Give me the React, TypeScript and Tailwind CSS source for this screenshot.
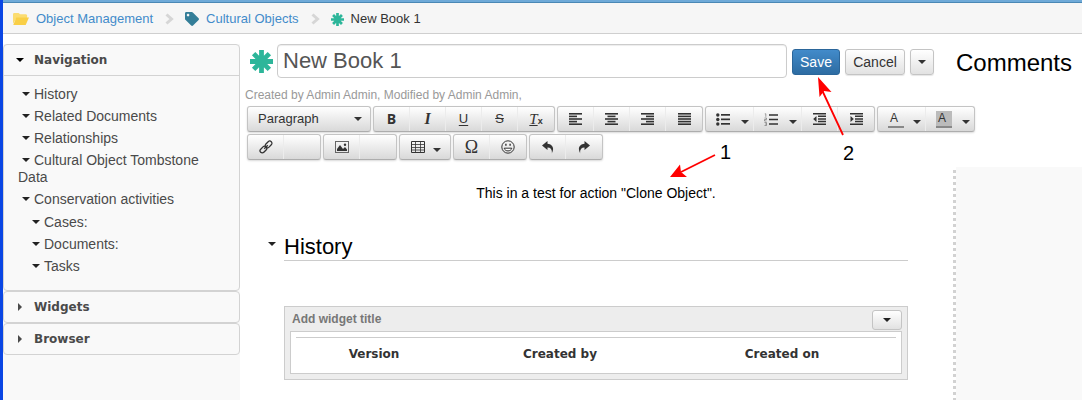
import type { ReactNode } from "react";
import { FaTag } from "react-icons/fa";

function Caret({ className = "" }: { className?: string }) {
  return (
    <svg viewBox="0 0 8 4" aria-hidden="true" className={`h-1 w-2 shrink-0 fill-current ${className}`}>
      <path d="M0 0h8L4 4z" />
    </svg>
  );
}

function CaretRight() {
  return (
    <svg viewBox="0 0 4 8" aria-hidden="true" className="mx-0.5 h-2 w-1 shrink-0 fill-current">
      <path d="M0 0v8l4-4z" />
    </svg>
  );
}

function Star({ className = "" }: { className?: string }) {
  return (
    <svg viewBox="0 0 24 24" aria-hidden="true" className={`shrink-0 text-[#2db69a] ${className}`}>
      <path
        d="M12 0v24M0 12h24M3.8 3.8l16.4 16.4M20.2 3.8L3.8 20.2"
        stroke="currentColor"
        strokeWidth="5"
      />
    </svg>
  );
}

function Folder() {
  return (
    <svg viewBox="0 0 17 14" aria-hidden="true" className="h-[14px] w-4 shrink-0">
      <path d="M0 12V1.5L1 .5h5l1.500 1.500H14l1 1V6H4z" fill="#fbdc70" />
      <path d="M3.500 5.500H17L13.500 13.500H.300z" fill="#f9cf46" />
    </svg>
  );
}

function Chevron() {
  return (
    <svg viewBox="0 0 9 12" aria-hidden="true" className="h-3 w-[9px] shrink-0">
      <path d="M1.500 1.500L6.500 6l-5 4.500" fill="none" stroke="#d6d6d6" strokeWidth="3" />
    </svg>
  );
}

type AlignKind = "left" | "center" | "right" | "full";

const alignX: Record<AlignKind, number> = { left: 0, center: 2.5, right: 5, full: 0 };

function Align({ kind }: { kind: AlignKind }) {
  const short = kind === "full" ? 13 : 8;
  return (
    <svg viewBox="0 0 13 12" aria-hidden="true" className="h-3 w-[13px]" fill="#333">
      {[0, 2.6, 5.2, 7.8, 10.4].map((y, i) => (
        <rect key={y} x={i % 2 ? alignX[kind] : 0} y={y} width={i % 2 ? short : 13} height="1.600" />
      ))}
    </svg>
  );
}

function BulletList() {
  return (
    <svg viewBox="0 0 14 13" aria-hidden="true" className="h-[13px] w-[14px]" fill="#333">
      {[2, 6.5, 11].map((y) => (
        <g key={y}>
          <circle cx="1.800" cy={y} r="1.700" />
          <rect x="5" y={y - 1} width="9" height="1.700" />
        </g>
      ))}
    </svg>
  );
}

function NumberList() {
  return (
    <svg viewBox="0 0 14 13" aria-hidden="true" className="h-[13px] w-[14px]">
      <path d="M5 2h9M5 6.500h9M5 11h9" stroke="#333" strokeWidth="1.600" />
      <path
        d="M.8.800h1v3M.5 5h2v1.500h-2V8h2M.5 9.500h2v3h-2M1 11h1.500"
        fill="none"
        stroke="#777"
        strokeWidth=".7"
      />
    </svg>
  );
}

function Indent({ out = false }: { out?: boolean }) {
  return (
    <svg viewBox="0 0 13 12" aria-hidden="true" className="h-3 w-[13px]" fill="#333">
      <path d="M0 0h13v1.500H0zM5 2.600h8v1.500H5zM5 5.200h8v1.500H5zM5 7.800h8v1.500H5zM0 10.400h13v1.500H0z" />
      <path d={out ? "M3.500 3v6L.200 6z" : "M.500 3v6l3.300-3z"} />
    </svg>
  );
}

function LinkIcon() {
  return (
    <svg viewBox="0 0 14 14" aria-hidden="true" className="size-[14px]" fill="none" stroke="#333" strokeWidth="1.300">
      <rect x="5.800" y="2.200" width="7.600" height="4.400" rx="2.200" transform="rotate(-45 9.600 4.400)" />
      <rect x=".600" y="7.400" width="7.600" height="4.400" rx="2.200" transform="rotate(-45 4.400 9.600)" />
      <path d="M5.200 8.800l3.600-3.600" />
    </svg>
  );
}

function PictureIcon() {
  return (
    <svg viewBox="0 0 14 12" aria-hidden="true" className="h-3 w-[14px]">
      <rect x=".500" y=".500" width="13" height="11" fill="none" stroke="#666" />
      <path d="M2 10V8l3-4 3 4 2-2 2 2.500V10z" fill="#333" />
      <circle cx="10" cy="3.700" r="1.200" fill="#333" />
    </svg>
  );
}

function GridIcon() {
  return (
    <svg viewBox="0 0 14 12" aria-hidden="true" className="h-3 w-[14px]" fill="none" stroke="#333">
      <path d="M.500.500h13v11H.500z" />
      <path d="M0 3.500h14M0 6.500h14M0 9h14M4.500 0v12M9.500 0v12" strokeWidth=".8" />
    </svg>
  );
}

function Smiley() {
  return (
    <svg viewBox="0 0 14 14" aria-hidden="true" className="size-[14px]" fill="none" stroke="#333">
      <circle cx="7" cy="7" r="6.200" />
      <path d="M3.200 8.200c.8 3.600 6.800 3.600 7.600 0z" fill="#fff" />
      <path d="M4.900 3.800v2M9.100 3.800v2" strokeWidth="1.400" />
    </svg>
  );
}

function HistoryArrow({ forward = false }: { forward?: boolean }) {
  return (
    <svg viewBox="0 0 12 13" aria-hidden="true" className={`h-[13px] w-3 ${forward ? "-scale-x-100" : ""}`}>
      <path d="M0 4.500L5.500 0v2.700c5 .3 7.200 4.600 4.300 9.800C10.300 8.700 9 6.600 5.500 6.500V9z" fill="#333" />
    </svg>
  );
}

function Group({ children }: { children: ReactNode }) {
  return (
    <div className="flex h-[26px] divide-x divide-[#ececec] rounded-[3px] border border-[#c4c4c4] border-b-[#adadad] bg-linear-to-b from-white to-[#d9d9d9] shadow-[0_1px_2px_rgba(0,0,0,0.15)]">
      {children}
    </div>
  );
}

function Tool({ label, menu = false, children }: { label: string; menu?: boolean; children?: ReactNode }) {
  return (
    <button
      type="button"
      aria-label={label}
      className={`flex items-center text-[#333] ${menu ? "w-12 justify-between pr-1 pl-[10px]" : "w-9 justify-center"}`}
    >
      {children}
      {menu && <Caret className="mt-[5px]" />}
    </button>
  );
}

const plainButton =
  "flex h-[26px] items-center justify-center rounded-[3px] border border-[#c4c4c4] bg-linear-to-b from-white to-[#e2e2e2] text-sm text-[#333] shadow-[0_1px_1px_rgba(0,0,0,0.1)]";

function NavItem({ label, children }: { label: string; children?: ReactNode }) {
  return (
    <li>
      <a href="#" className="mb-[5px] block">
        <Caret className="mr-1 ml-1 inline-block align-[3px] text-[#222]" />
        {label}
      </a>
      {children}
    </li>
  );
}

function Crumb({ icon, label }: { icon: ReactNode; label: string }) {
  return (
    <li className="flex items-center gap-3">
      <a href="#" className="flex items-center gap-[7px] text-[#428bca]">
        {icon}
        {label}
      </a>
      <Chevron />
    </li>
  );
}

export default function App() {
  return (
    <div className="relative flex min-h-screen flex-col overflow-hidden border-l-[3px] border-[#0a46e4] bg-white font-['Liberation_Sans',Arial,sans-serif] text-[13px] text-[#333]">
      <div className="h-[3px] border-b border-[#4a88b5] bg-[#6faad8]" />
      <nav aria-label="Breadcrumb" className="border-b border-[#cfcfcf] bg-[#f6f6f6]">
        <ol className="flex h-[30px] items-center gap-[11px] pt-0.5 pl-[10px]">
          <Crumb icon={<Folder />} label="Object Management" />
          <Crumb icon={<FaTag aria-hidden="true" className="size-[14px] text-[#347e98]" />} label="Cultural Objects" />
          <li className="flex items-center gap-[7px]">
            <Star className="size-[13px]" />
            New Book 1
          </li>
        </ol>
      </nav>

      <div className="mt-[10px] flex grow">
        <aside className="w-[237px] shrink-0 bg-[#f9f9f9] text-sm leading-[17px] text-[#4a4a4a]">
          <section className="rounded-[4px] border border-[#d3d3d3]">
            <h2 className="border-b border-[#d3d3d3] font-['DejaVu_Sans',Verdana,sans-serif] text-xs">
              <button type="button" className="flex h-[30px] w-full items-center gap-[10px] pl-3 font-bold">
                <Caret className="text-black" />
                Navigation
              </button>
            </h2>
            <ul className="pt-[10px] pr-6 pb-[10px] pl-[14px]">
              <NavItem label="History" />
              <NavItem label="Related Documents" />
              <NavItem label="Relationships" />
              <NavItem label="Cultural Object Tombstone Data" />
              <NavItem label="Conservation activities">
                <ul className="pt-px pl-[10px]">
                  <NavItem label="Cases:" />
                  <NavItem label="Documents:" />
                  <NavItem label="Tasks" />
                </ul>
              </NavItem>
            </ul>
          </section>
          {["Widgets", "Browser"].map((name) => (
            <h2
              key={name}
              className="rounded-[4px] border border-[#d3d3d3] font-['DejaVu_Sans',Verdana,sans-serif] text-xs"
            >
              <button type="button" className="flex h-[30px] w-full items-center gap-[10px] pl-3 font-bold">
                <CaretRight />
                {name}
              </button>
            </h2>
          ))}
        </aside>

        <main className="flex min-w-0 grow flex-col">
          <div className="flex h-[34px] items-center gap-[5px] pl-[10px]">
            <Star className="-mr-px size-[23px]" />
            <input
              aria-label="Object name"
              defaultValue="New Book 1"
              className="h-[34px] min-w-0 grow rounded-[4px] border border-[#ccc] px-[5px] text-[22px] text-[#555] shadow-[inset_0_1px_1px_rgba(0,0,0,0.075)]"
            />
            <button
              type="button"
              className="mt-0.5 h-[26px] w-12 rounded-[3px] border border-[#2b669a] bg-linear-to-b from-[#428bca] to-[#2d6ca2] text-sm text-white"
            >
              Save
            </button>
            <button type="button" className={`mt-0.5 w-[60px] ${plainButton}`}>
              Cancel
            </button>
            <button type="button" aria-label="More actions" className={`mt-0.5 w-6 ${plainButton}`}>
              <Caret />
            </button>
            <h2 className="mt-1 ml-[17px] w-[126px] text-2xl text-black">Comments</h2>
          </div>
          <p className="mt-[9px] pl-[5px] text-xs leading-4 text-[#999]">
            Created by Admin Admin, Modified by Admin Admin,
          </p>

          <div role="toolbar" aria-label="Formatting" className="mt-[3px] flex flex-col gap-0.5 pl-[7px]">
            <div className="flex gap-0.5">
              <Group>
                <button type="button" className="flex w-[122px] items-center justify-between pr-2 pl-[10px]">
                  Paragraph
                  <Caret />
                </button>
              </Group>
              <Group>
                <Tool label="Bold">
                  <b className="font-['Open_Sans',sans-serif] text-sm">B</b>
                </Tool>
                <Tool label="Italic">
                  <i className="font-['Liberation_Serif',serif] text-base font-bold">I</i>
                </Tool>
                <Tool label="Underline">
                  <span className="underline underline-offset-2">U</span>
                </Tool>
                <Tool label="Strikethrough">
                  <s>S</s>
                </Tool>
                <Tool label="Clear formatting">
                  <span className="flex items-end leading-4">
                    <i className="font-['Liberation_Serif',serif] text-[15px] underline">T</i>
                    <b className="text-[9px] leading-3">x</b>
                  </span>
                </Tool>
              </Group>
              <Group>
                <Tool label="Align left">
                  <Align kind="left" />
                </Tool>
                <Tool label="Align center">
                  <Align kind="center" />
                </Tool>
                <Tool label="Align right">
                  <Align kind="right" />
                </Tool>
                <Tool label="Justify">
                  <Align kind="full" />
                </Tool>
              </Group>
              <Group>
                <Tool label="Bullet list" menu>
                  <BulletList />
                </Tool>
                <Tool label="Numbered list" menu>
                  <NumberList />
                </Tool>
                <Tool label="Decrease indent">
                  <Indent out />
                </Tool>
                <Tool label="Increase indent">
                  <Indent />
                </Tool>
              </Group>
              <Group>
                <Tool label="Text color" menu>
                  <span className="h-[17px] w-4 border-b-2 border-[#888] pr-1 text-xs leading-[15px]">A</span>
                </Tool>
                <Tool label="Background color" menu>
                  <span className="h-[17px] w-4 border-b-2 border-[#888] bg-[#bbb] pr-1 text-xs leading-[15px]">A</span>
                </Tool>
              </Group>
            </div>
            <div className="flex gap-0.5">
              <Group>
                <Tool label="Insert link">
                  <LinkIcon />
                </Tool>
                <Tool label="Remove link" />
              </Group>
              <Group>
                <Tool label="Insert image">
                  <PictureIcon />
                </Tool>
                <Tool label="Insert media" />
              </Group>
              <Group>
                <button
                  type="button"
                  aria-label="Table"
                  className="flex w-[50px] items-center justify-between pr-[9px] pl-[11px] text-[#333]"
                >
                  <GridIcon />
                  <Caret className="mt-[5px]" />
                </button>
              </Group>
              <Group>
                <Tool label="Special character">
                  <span className="font-['Liberation_Serif',serif] text-lg leading-none">Ω</span>
                </Tool>
                <Tool label="Emoticons">
                  <Smiley />
                </Tool>
              </Group>
              <Group>
                <Tool label="Undo">
                  <HistoryArrow />
                </Tool>
                <Tool label="Redo">
                  <HistoryArrow forward />
                </Tool>
              </Group>
            </div>
          </div>

          <div className="mt-[7px] flex grow">
            <article className="grow pt-[18px] pr-[45px] pl-11 text-black">
              <p className="text-center text-sm leading-4">This in a test for action "Clone Object".</p>
              <div className="mt-8 -ml-4 flex items-center gap-2">
                <button type="button" aria-label="Toggle History" className="text-[#222]">
                  <Caret className="mb-[6px]" />
                </button>
                <h2 className="grow border-b border-[#ccc] text-[22px] leading-[27px]">History</h2>
              </div>
              <section className="mt-[45px] border border-[#ccc] bg-[#ededed] px-[5px] pb-[5px]">
                <div className="flex h-6 items-center justify-between pl-[2px]">
                  <h3 className="text-xs font-bold text-[#777]">Add widget title</h3>
                  <button
                    type="button"
                    aria-label="Widget options"
                    className="mt-0.5 flex h-5 w-[30px] items-center justify-center rounded-[3px] border border-[#c4c4c4] bg-linear-to-b from-white to-[#e2e2e2] text-[#222]"
                  >
                    <Caret />
                  </button>
                </div>
                <div className="border border-[#ccc] bg-white px-[5px] pt-[5px] pb-[3px]">
                  <table className="w-full table-fixed border-t border-[#ccc] font-['DejaVu_Sans',Verdana,sans-serif] text-xs text-[#333]">
                    <thead>
                      <tr className="h-8">
                        <th className="w-[26%]">Version</th>
                        <th className="w-[36%]">Created by</th>
                        <th className="w-[38%]">Created on</th>
                      </tr>
                    </thead>
                  </table>
                </div>
              </section>
            </article>
            <aside aria-label="Comments" className="flex w-[129px] shrink-0 bg-[#f9f9f9]">
              <div className="w-[3px] bg-[repeating-linear-gradient(to_bottom,#fff_0px,#fff_3px,#d2d2d2_3px,#d2d2d2_6px)]" />
            </aside>
          </div>
        </main>
      </div>

      <div className="pointer-events-none absolute top-[70px] left-[660px] text-black">
        <svg viewBox="0 0 200 115" aria-hidden="true" className="h-[115px] w-[200px]">
          <path d="M52 85L18 102M180 65L159 20" stroke="#f00" strokeWidth="1.800" />
          <path d="M7 107L17 94.500L18 102L24 107zM155 7L168.500 22L161 21L156.500 27z" fill="#f00" />
        </svg>
        <span className="absolute top-[70px] left-[57px] text-xl leading-6">1</span>
        <span className="absolute top-[71px] left-[180px] text-xl leading-6">2</span>
      </div>
    </div>
  );
}
